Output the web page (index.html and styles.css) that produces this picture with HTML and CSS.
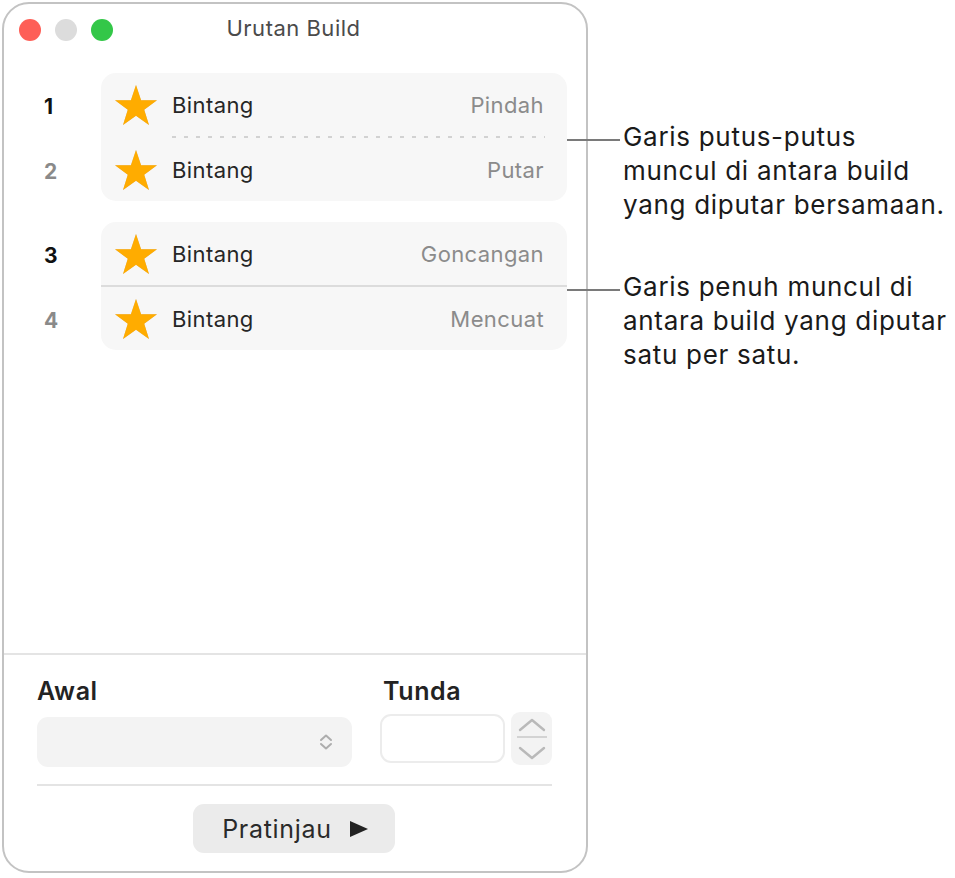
FILE: index.html
```html
<!DOCTYPE html>
<html lang="id">
<head>
<meta charset="utf-8">
<title>Urutan Build</title>
<link rel="stylesheet" href="styles.css">
</head>
<body>
<div class="page">
  <div class="window">
    <div class="titlebar">
      <div class="lights">
        <span class="light red"></span>
        <span class="light gray"></span>
        <span class="light green"></span>
      </div>
      <div class="title">Urutan Build</div>
      <div></div>
    </div>

    <div class="list">
      <div class="group">
        <div class="nums">
          <div class="num active">1</div>
          <div class="num">2</div>
        </div>
        <div class="card">
          <div class="row">
            <svg class="star" viewBox="2.45 0 95.1 90.45"><polygon points="50,0 61.5,34.2 97.55,34.55 68.6,56 79.39,90.45 50,69.5 20.61,90.45 31.4,56 2.45,34.55 38.5,34.2"/></svg>
            <span class="name">Bintang</span>
            <span class="effect">Pindah</span>
          </div>
          <div class="dash"></div>
          <div class="row">
            <svg class="star" viewBox="2.45 0 95.1 90.45"><polygon points="50,0 61.5,34.2 97.55,34.55 68.6,56 79.39,90.45 50,69.5 20.61,90.45 31.4,56 2.45,34.55 38.5,34.2"/></svg>
            <span class="name">Bintang</span>
            <span class="effect">Putar</span>
          </div>
        </div>
      </div>

      <div class="group">
        <div class="nums">
          <div class="num active">3</div>
          <div class="num">4</div>
        </div>
        <div class="card">
          <div class="row">
            <svg class="star" viewBox="2.45 0 95.1 90.45"><polygon points="50,0 61.5,34.2 97.55,34.55 68.6,56 79.39,90.45 50,69.5 20.61,90.45 31.4,56 2.45,34.55 38.5,34.2"/></svg>
            <span class="name">Bintang</span>
            <span class="effect">Goncangan</span>
          </div>
          <div class="solid"></div>
          <div class="row">
            <svg class="star" viewBox="2.45 0 95.1 90.45"><polygon points="50,0 61.5,34.2 97.55,34.55 68.6,56 79.39,90.45 50,69.5 20.61,90.45 31.4,56 2.45,34.55 38.5,34.2"/></svg>
            <span class="name">Bintang</span>
            <span class="effect">Mencuat</span>
          </div>
        </div>
      </div>
    </div>

    <div class="bottom">
      <div class="fields">
        <div class="label">Awal</div>
        <div class="label label-tunda">Tunda</div>
        <div class="select">
          <svg class="updown" viewBox="0 0 14 16"><path d="M2 6 L7 1.5 L12 6 M2 10 L7 14.5 L12 10"/></svg>
        </div>
        <div class="tunda">
          <div class="input"></div>
          <div class="stepper">
            <svg class="chev" viewBox="0 0 28 14"><path d="M2 12 L14 2 L26 12"/></svg>
            <div class="step-line"></div>
            <svg class="chev" viewBox="0 0 28 14"><path d="M2 2 L14 12 L26 2"/></svg>
          </div>
        </div>
      </div>
      <div class="sep2"></div>
      <div class="actions">
        <button class="preview">Pratinjau <svg class="play" viewBox="0 0 18 16"><polygon points="0,0 18,8 0,16"/></svg></button>
      </div>
    </div>
  </div>

  <div class="callouts">
    <div class="callout c1">Garis putus-putus<br>muncul di antara build<br>yang diputar bersamaan.</div>
    <div class="callout c2">Garis penuh muncul di<br>antara build yang diputar<br>satu per satu.</div>
  </div>
</div>
</body>
</html>
```

FILE: styles.css
```css
* { box-sizing: border-box; }

html, body {
  margin: 0;
  padding: 0;
  background: #ffffff;
}

body {
  font-family: Inter, "Noto Sans", "Liberation Sans", sans-serif;
  color: #222222;
}

.page {
  display: flex;
  align-items: flex-start;
  padding: 2px 0 0 2px;
}

.window {
  width: 586px;
  height: 871px;
  border: 2px solid #c3c3c3;
  border-radius: 27px;
  display: flex;
  flex-direction: column;
  background: #ffffff;
  flex-shrink: 0;
}

/* Title bar */
.titlebar {
  height: 52px;
  display: grid;
  grid-template-columns: 1fr auto 1fr;
  align-items: center;
  padding: 0 0 0 15px;
}

.lights {
  display: flex;
  gap: 14px;
}

.light {
  width: 22px;
  height: 22px;
  border-radius: 50%;
  display: block;
}
.light.red { background: #fe5f57; }
.light.gray { background: #dcdcdc; }
.light.green { background: #33c748; }

.title {
  font-size: 22px;
  letter-spacing: 0.5px;
  color: #4b4b4b;
  margin: 0 18px 4px 0;
}

/* List */
.list {
  flex: 1;
  padding-top: 17px;
  display: flex;
  flex-direction: column;
  gap: 21px;
}

.group {
  display: flex;
}

.nums {
  width: 97px;
  display: flex;
  flex-direction: column;
  gap: 2px;
  padding-left: 40px;
}

.num {
  height: 63px;
  display: flex;
  align-items: center;
  padding-top: 3px;
  font-size: 21px;
  font-weight: 700;
  color: #8a8a8a;
}
.num.active { color: #111111; }

.card {
  width: 466px;
  background: #f7f7f7;
  border-radius: 15px;
  display: flex;
  flex-direction: column;
}

.row {
  height: 63px;
  display: flex;
  align-items: center;
  padding: 0 23px 0 14px;
}

.star {
  width: 42px;
  height: 40px;
  fill: #ffac00;
  filter: drop-shadow(0 0.5px 0.6px rgba(150, 90, 0, 0.35));
  flex-shrink: 0;
}

.name {
  margin-left: 15px;
  font-size: 22px;
  letter-spacing: 0.4px;
  color: #262626;
  flex: 1;
}

.effect {
  font-size: 22px;
  letter-spacing: 0.4px;
  color: #8b8b8b;
}

.dash {
  height: 2px;
  margin: 0 22px 0 71px;
  background: repeating-linear-gradient(to right, #d2d2d2 0 4px, transparent 4px 12px);
}

.solid {
  height: 2px;
  background: #dcdcdc;
}

/* Bottom */
.bottom {
  border-top: 2px solid #e4e4e4;
  padding: 22px 34px 18px 33px;
  display: flex;
  flex-direction: column;
}

.fields {
  display: grid;
  grid-template-columns: 315px auto;
  column-gap: 28px;
  row-gap: 7px;
  align-items: start;
}

.label {
  font-size: 25px;
  line-height: 28px;
  letter-spacing: 0.6px;
  font-weight: 600;
  color: #232323;
}
.label-tunda { padding-left: 3px; }

.select {
  margin-top: 5px;
  height: 50px;
  background: #f3f3f3;
  border-radius: 11px;
  display: flex;
  align-items: center;
  justify-content: flex-end;
  padding-right: 19px;
}

.updown {
  width: 14px;
  height: 16px;
  fill: none;
  stroke: #adadad;
  stroke-width: 2;
  stroke-linecap: round;
  stroke-linejoin: round;
}

.tunda {
  display: flex;
  align-items: flex-start;
  gap: 6px;
}

.input {
  margin-top: 2px;
  width: 125px;
  height: 49px;
  border: 2px solid #ececec;
  border-radius: 11px;
  background: #ffffff;
}

.stepper {
  width: 41px;
  height: 53px;
  background: #f3f3f3;
  border-radius: 9px;
  display: flex;
  flex-direction: column;
  align-items: center;
  padding-top: 6px;
}

.chev {
  width: 28px;
  height: 14px;
  fill: none;
  stroke: #b9b9b9;
  stroke-width: 2.4;
  stroke-linecap: round;
  stroke-linejoin: round;
}

.step-line {
  width: 30px;
  height: 2px;
  background: #d3d3d3;
  margin: 4px 0 8px;
}

.sep2 {
  margin-top: 17px;
  height: 2px;
  background: #e4e4e4;
}

.actions {
  display: flex;
  justify-content: center;
  padding-top: 18px;
  padding-right: 1px;
}

.preview {
  width: 202px;
  height: 49px;
  border: none;
  border-radius: 11px;
  background: #ebebeb;
  font-family: Inter, "Noto Sans", "Liberation Sans", sans-serif;
  font-size: 25px;
  letter-spacing: 0.7px;
  color: #2a2a2a;
  display: flex;
  align-items: center;
  justify-content: center;
  gap: 18px;
  padding: 0 0 0 2px;
}

.play {
  width: 18px;
  height: 16px;
  fill: #222222;
}

/* Callouts */
.callouts {
  padding: 118px 0 0 35px;
  display: flex;
  flex-direction: column;
  gap: 48px;
}

.callout {
  position: relative;
  font-size: 26px;
  line-height: 34px;
  letter-spacing: 0.7px;
  color: #1a1a1a;
  white-space: nowrap;
}

.callout::before {
  content: "";
  position: absolute;
  left: -56px;
  top: 19px;
  width: 53px;
  height: 2px;
  background: #7a7a7a;
}
```
